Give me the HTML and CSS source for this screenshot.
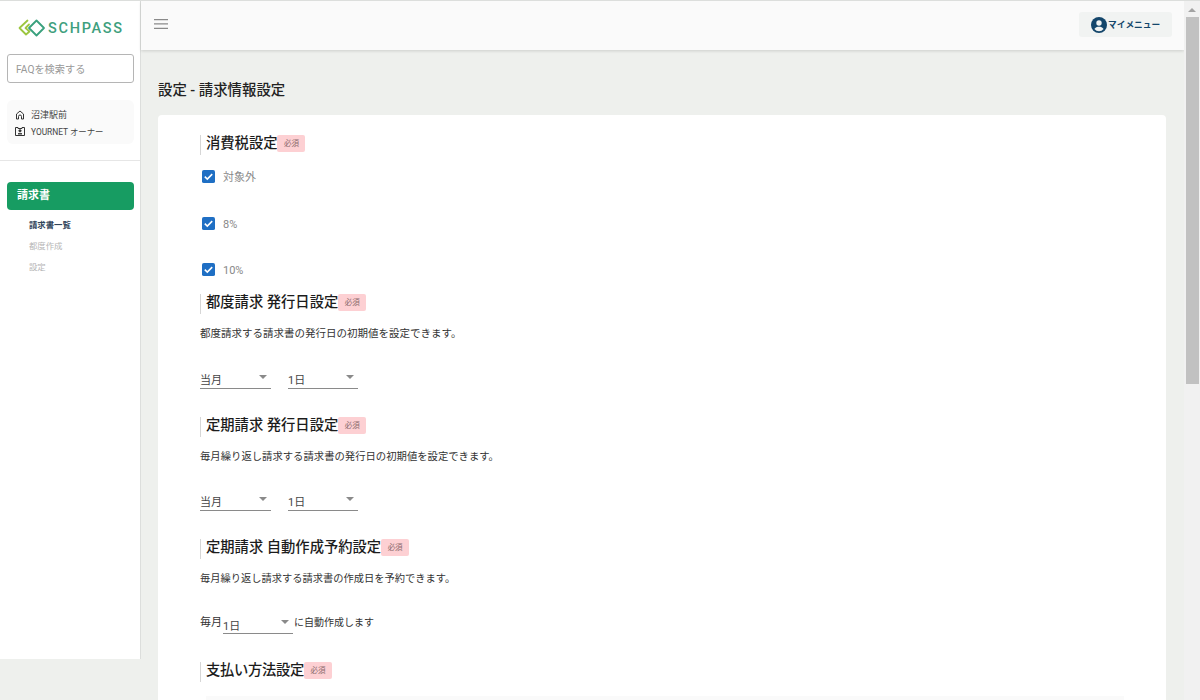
FILE: index.html
```html
<!DOCTYPE html>
<html lang="ja">
<head>
<meta charset="utf-8">
<title>SCHPASS 設定</title>
<link rel="stylesheet" href="styles.css">
</head>
<body>
<div class="app">
  <div class="viewport">
    <aside class="sidebar">
      <div class="logo">
        <svg class="logo-mark" width="28" height="18" viewBox="0 0 28 18" fill="none" stroke-linejoin="round" stroke-linecap="round">
          <path d="M9.500 1.500 1.500 9l6.500 6.500 3.500-3L7.500 9l3.500-3.500" stroke="#9cc63f" stroke-width="1.800"/>
          <path d="M18.500 1.500 26 9l-7.500 7.500L11 9z" stroke="#3aa17e" stroke-width="1.800"/>
        </svg>
        <span class="logo-text">SCHPASS</span>
      </div>
      <div class="search-box">FAQを検索する</div>
      <div class="account">
        <div class="account-row">
          <svg width="10" height="10" viewBox="0 0 10 10" fill="none" stroke="#333" stroke-width="1" stroke-linejoin="round"><path d="M1.500 9V4L5 1l3.500 3v5h-2V6.500a1.500 1.500 0 0 0-3 0V9z"/></svg>
          <span>沼津駅前</span>
        </div>
        <div class="account-row account-role">
          <svg width="10" height="10" viewBox="0 0 10 10" fill="none" stroke="#333" stroke-width="1"><path d="M.5 1.500h2.500v1h4v-1h2.500v8h-9z"/><circle cx="5" cy="4.800" r="1.100" fill="#333"/><path d="M3 7.800h4" stroke-width="1.400"/></svg>
          <span>YOURNET オーナー</span>
        </div>
      </div>
      <div class="side-divider"></div>
      <nav class="nav">
        <div class="nav-main">請求書</div>
        <a class="nav-sub nav-current">請求書一覧</a>
        <a class="nav-sub">都度作成</a>
        <a class="nav-sub">設定</a>
      </nav>
    </aside>
    <div class="main">
      <header class="topbar">
        <svg class="hamburger" width="14" height="10" viewBox="0 0 14 10" fill="#8a8a8a"><path d="M0 0h14v1.300H0zM0 4.300h14v1.300H0zM0 8.700h14V10H0z"/></svg>
        <div class="my-menu">
          <svg width="16" height="16" viewBox="0 0 16 16"><circle cx="8" cy="8" r="8" fill="#14466b"/><circle cx="8" cy="6" r="2.700" fill="#f1f3f2"/><path d="M3.400 12c1-1.700 2.800-2.300 4.600-2.300s3.600.6 4.600 2.300A6 6 0 0 1 8 14.200 6 6 0 0 1 3.400 12z" fill="#f1f3f2"/></svg>
          <span>マイメニュー</span>
        </div>
      </header>
      <h1 class="page-title">設定 - 請求情報設定</h1>
      <section class="card">
        <h2 class="sec-head">消費税設定<span class="req">必須</span></h2>
        <ul class="checks">
          <li class="check"><svg class="tick" width="13" height="13" viewBox="0 0 14 14"><rect width="14" height="14" rx="2" fill="#1f6fc4"/><path d="M3 7.200l2.700 2.600L11 4.500" stroke="#fff" stroke-width="1.700" fill="none"/></svg>対象外</li>
          <li class="check"><svg class="tick" width="13" height="13" viewBox="0 0 14 14"><rect width="14" height="14" rx="2" fill="#1f6fc4"/><path d="M3 7.200l2.700 2.600L11 4.500" stroke="#fff" stroke-width="1.700" fill="none"/></svg>8%</li>
          <li class="check"><svg class="tick" width="13" height="13" viewBox="0 0 14 14"><rect width="14" height="14" rx="2" fill="#1f6fc4"/><path d="M3 7.200l2.700 2.600L11 4.500" stroke="#fff" stroke-width="1.700" fill="none"/></svg>10%</li>
        </ul>
        <h2 class="sec-head">都度請求 発行日設定<span class="req">必須</span></h2>
        <p class="desc">都度請求する請求書の発行日の初期値を設定できます。</p>
        <div class="selects">
          <div class="select"><span>当月</span><i class="caret"></i></div>
          <div class="select"><span>1日</span><i class="caret"></i></div>
        </div>
        <h2 class="sec-head sec-gap">定期請求 発行日設定<span class="req">必須</span></h2>
        <p class="desc desc-mid">毎月繰り返し請求する請求書の発行日の初期値を設定できます。</p>
        <div class="selects">
          <div class="select"><span>当月</span><i class="caret"></i></div>
          <div class="select"><span>1日</span><i class="caret"></i></div>
        </div>
        <h2 class="sec-head sec-gap">定期請求 自動作成予約設定<span class="req">必須</span></h2>
        <p class="desc desc-tight">毎月繰り返し請求する請求書の作成日を予約できます。</p>
        <div class="inline-select">
          <span class="inline-lead">毎月</span>
          <div class="select"><span>1日</span><i class="caret"></i></div>
          <span class="inline-tail">に自動作成します</span>
        </div>
        <h2 class="sec-head sec-gap sec-tight">支払い方法設定<span class="req">必須</span></h2>
        <div class="pay-box"></div>
      </section>
    </div>
  </div>
  <div class="scrollbar">
    <div class="arrow"></div>
    <div class="thumb"></div>
  </div>
</div>
</body>
</html>
```
FILE: styles.css
```css
* { box-sizing: border-box; }
html, body { margin: 0; height: 700px; overflow: hidden; }
body {
  font-family: Roboto, "Noto Sans CJK JP", sans-serif;
  color: #222;
  background: #eef0ed;
}
.app { display: flex; height: 700px; border-top: 1px solid #dcdedc; }
.viewport { flex: 1; display: flex; min-width: 0; align-items: flex-start; overflow: hidden; height: 699px; }

.sidebar {
  width: 141px;
  height: 658px;
  flex: none;
  background: #fff;
  border-right: 1px solid #dcdedc;
  display: flex;
  flex-direction: column;
}
.logo { display: flex; gap: 2px; padding: 18px 0 0 18px; height: 53px; align-items: flex-start; }
.logo-text { font-size: 14.500px; font-weight: 500; letter-spacing: 1.700px; color: #3f9f7e; line-height: 19px; }
.search-box {
  margin: 0 6px 0 7px;
  height: 29px;
  border: 1px solid #b5b5b5;
  border-radius: 3px;
  font-size: 10.200px;
  line-height: 29px;
  padding-left: 8px;
  color: #999;
}
.account {
  margin: 17px 6px 0 7px;
  padding: 6px 7px 4px 8px;
  height: 44px;
  background: #fafafa;
  border-radius: 6px;
  font-size: 9px;
  color: #444;
}
.account-row { display: flex; align-items: center; gap: 6px; height: 17px; }
.account-role { font-size: 8.400px; height: 16px; }
.side-divider { margin-top: 16px; border-top: 1px solid #e6e6e6; }
.nav { padding: 21px 6px 0 7px; display: flex; flex-direction: column; }
.nav-main {
  height: 28px;
  background: #179c62;
  border-radius: 4px;
  color: #fff;
  font-size: 11px;
  font-weight: 700;
  line-height: 27px;
  padding-left: 10px;
  margin-bottom: 5px;
}
.nav-sub { font-size: 8.400px; height: 21px; line-height: 21px; padding-left: 22px; color: #b5b5b5; }
.nav-current { color: #30445a; font-weight: 700; }

.main { flex: 1; min-width: 0; }
.topbar {
  height: 49px;
  background: #fafafa;
  box-shadow: 0 1px 3px rgba(0, 0, 0, .14);
  display: flex;
  align-items: center;
  justify-content: space-between;
  padding: 0 12px 2px 13px;
}
.hamburger { margin-top: -1px; }
.my-menu {
  width: 93px;
  height: 25px;
  background: #f1f3f2;
  border-radius: 3px;
  display: flex;
  align-items: center;
  gap: 1px;
  padding-left: 12px;
  font-size: 8.700px;
  font-weight: 700;
  color: #14466b;
}
.page-title { margin: 32px 0 0 17px; font-size: 14.400px; line-height: 18px; font-weight: 500; color: #222; }
.card {
  margin: 15px 18px 0 17px;
  height: 640px;
  background: #fff;
  border-radius: 4px;
  padding: 20px 42px 0;
}
.sec-head {
  margin: 0;
  height: 20px;
  border-left: 1px solid #d6d6d6;
  padding-left: 5px;
  display: flex;
  align-items: flex-start;
  font-size: 14.300px;
  line-height: 17px;
  font-weight: 500;
  color: #1c1c1c;
}
.sec-gap { margin-top: 28px; }
.sec-tight { letter-spacing: -.3px; }
.req {
  background: #fdd0d3;
  color: #8a6a6c;
  font-size: 7.500px;
  font-weight: 400;
  letter-spacing: 0;
  width: 28px;
  height: 17px;
  line-height: 17px;
  text-align: center;
  border-radius: 2px;
}
.checks { list-style: none; margin: 0; padding: 0; }
.check {
  height: 46.500px;
  padding: 15px 0 0 2px;
  display: flex;
  align-items: flex-start;
  gap: 8px;
  font-size: 11px;
  line-height: 16px;
  color: #888;
}
.check:last-child { height: 46px; }
.tick { flex: none; }
.desc { margin: 12px 0 0; height: 14.500px; font-size: 10.500px; line-height: 16.500px; color: #333; }
.desc-mid { font-size: 10.350px; }
.desc-tight { font-size: 10.250px; }
.selects { display: flex; gap: 17px; margin-top: 28px; }
.select {
  position: relative;
  width: 71px;
  height: 20px;
  border-bottom: 1px solid #8a8a8a;
  font-size: 11px;
  line-height: 24px;
  color: #444;
}
.selects .select:last-child { width: 70px; }
.caret {
  position: absolute;
  right: 4px;
  top: 6px;
  border: 4px solid transparent;
  border-top: 4px solid #8a8a8a;
  border-bottom: 0;
}
.inline-select { display: flex; align-items: flex-start; margin-top: 28px; font-size: 10px; line-height: 18px; color: #333; }
.inline-select .select { width: 70px; line-height: 25px; }
.inline-lead { width: 23px; font-size: 11px; }
.inline-tail { margin-left: 1px; }
.pay-box { margin: 14.500px 0 0 6px; height: 30px; background: #fafafa; }

.scrollbar { width: 16px; flex: none; background: #f1f1f1; display: flex; flex-direction: column; align-items: center; }
.arrow { margin: 7px 0 5px; border: 4px solid transparent; border-bottom: 4px solid #a3a3a3; border-top: 0; }
.thumb { width: 13px; height: 367px; background: #c1c1c1; }
```
